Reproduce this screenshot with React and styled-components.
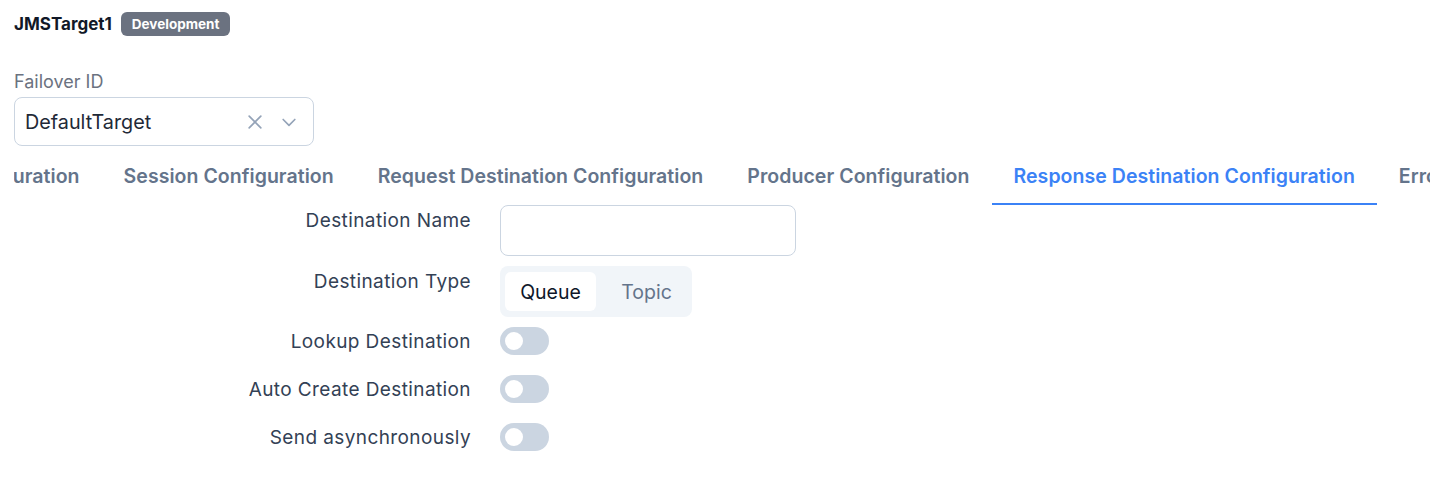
import React, { useLayoutEffect, useRef, useState } from "react";
import styled, { createGlobalStyle } from "styled-components";

const GlobalStyle = createGlobalStyle`
    * { box-sizing: border-box; }
    body {
        margin: 0;
        background: #ffffff;
        font-family: Inter, "Noto Sans", sans-serif;
        color: #334155;
    }
`;

const Page = styled.div`
    padding: 12px 0 0 14px;
    width: 1450px;
    height: 489px;
    overflow: hidden;
`;

const Header = styled.div`
    display: flex;
    align-items: center;
    gap: 9px;
    height: 24px;
`;

const Title = styled.h1`
    margin: 0;
    font-size: 17px;
    font-weight: 700;
    color: #111827;
`;

const Badge = styled.span`
    background: #6b7280;
    color: #ffffff;
    font-size: 13.5px;
    font-weight: 700;
    padding: 0 11px;
    height: 24px;
    line-height: 24px;
    border-radius: 6px;
`;

const Field = styled.div`
    margin-top: 34px;
    width: 300px;
`;

const FieldLabel = styled.label`
    display: block;
    font-size: 18px;
    color: #6b7280;
    line-height: 24px;
    margin-bottom: 3px;
`;

const SelectBox = styled.div`
    display: flex;
    align-items: center;
    height: 49px;
    border: 1px solid #cbd5e1;
    border-radius: 8px;
    padding: 0 14px 0 10px;
`;

const SelectValue = styled.span`
    flex: 1;
    font-size: 19.8px;
    color: #1f2937;
`;

const SelectIcons = styled.span`
    display: flex;
    align-items: center;
    gap: 14px;
    color: #94a3b8;
`;

const TabsViewport = styled.div`
    margin-top: 8px;
    width: 1416px;
    overflow: hidden;
`;

const TabTrack = styled.div`
    display: flex;
    white-space: nowrap;
    height: 51px;
`;

const Tab = styled.div`
    flex: none;
    padding: 0 22px;
    height: 51px;
    line-height: 44px;
    font-size: 19.5px;
    letter-spacing: 0.05px;
    font-weight: 600;
    color: ${(p) => (p.$active ? "#3b82f6" : "#64748b")};
    border-bottom: 2px solid ${(p) => (p.$active ? "#3b82f6" : "transparent")};
`;

const Form = styled.div`
    display: flex;
    flex-direction: column;
    gap: 10px;
`;

const Row = styled.div`
    display: grid;
    grid-template-columns: 457px auto;
    column-gap: 29px;
    align-items: start;
    min-height: ${(p) => p.$h || 28}px;
`;

const RowLabel = styled.div`
    text-align: right;
    font-size: 19px;
    letter-spacing: 0.4px;
    line-height: 28px;
    padding-top: ${(p) => (p.$top ? 2 : 1)}px;
    color: #334155;
`;

const TextInput = styled.input`
    width: 296px;
    height: 51px;
    border: 1px solid #cbd5e1;
    border-radius: 8px;
    outline: none;
    font-size: 18px;
    padding: 0 12px;
    font-family: inherit;
`;

const Segmented = styled.div`
    display: inline-flex;
    background: #f1f5f9;
    border-radius: 8px;
    padding: 6px 5px;
    height: 51px;
`;

const Segment = styled.button`
    border: 0;
    font-family: inherit;
    font-size: 19.5px;
    height: 39px;
    padding: 0 0 0 ${(p) => (p.$active ? 0 : 10)}px;
    width: 91px;
    border-radius: 6px;
    background: ${(p) => (p.$active ? "#ffffff" : "transparent")};
    color: ${(p) => (p.$active ? "#0f172a" : "#64748b")};
    cursor: pointer;
`;

const Switch = styled.button`
    position: relative;
    width: 49px;
    height: 28px;
    border: 0;
    border-radius: 14px;
    background: ${(p) => (p.$on ? "#3b82f6" : "#cbd5e1")};
    padding: 0;
    cursor: pointer;

    &::after {
        content: "";
        position: absolute;
        top: 5px;
        left: ${(p) => (p.$on ? 26 : 5)}px;
        width: 18px;
        height: 18px;
        border-radius: 50%;
        background: #ffffff;
    }
`;

const tabs = [
    "Connection Configuration",
    "Session Configuration",
    "Request Destination Configuration",
    "Producer Configuration",
    "Response Destination Configuration",
    "Error Handling",
];

const App = () => {
    const viewport = useRef();
    const firstTab = useRef();
    const [type, setType] = useState("Queue");
    const [flags, setFlags] = useState({ lookup: false, auto: false, async: false });

    useLayoutEffect(() => {
        // tab strip is scrolled so only the tail of the first tab shows
        viewport.current.scrollLeft = firstTab.current.offsetWidth - 88;
    }, []);

    const flip = (k) => setFlags({ ...flags, [k]: !flags[k] });

    return (
        <Page>
            <GlobalStyle />
            <Header>
                <Title>JMSTarget1</Title>
                <Badge>Development</Badge>
            </Header>

            <Field>
                <FieldLabel>Failover ID</FieldLabel>
                <SelectBox>
                    <SelectValue>DefaultTarget</SelectValue>
                    <SelectIcons>
                        <svg width="20" height="20" viewBox="0 0 24 24" fill="none" stroke="currentColor" strokeWidth="2" strokeLinecap="round">
                            <path d="M5 5l14 14M19 5L5 19" />
                        </svg>
                        <svg width="20" height="20" viewBox="0 0 24 24" fill="none" stroke="currentColor" strokeWidth="2" strokeLinecap="round" strokeLinejoin="round">
                            <path d="M5 9l7 7 7-7" />
                        </svg>
                    </SelectIcons>
                </SelectBox>
            </Field>

            <TabsViewport ref={viewport}>
                <TabTrack>
                    {tabs.map((t, i) => (
                        <Tab key={t} ref={i === 0 ? firstTab : undefined} $active={i === 4}>
                            {t}
                        </Tab>
                    ))}
                </TabTrack>
            </TabsViewport>

            <Form>
                <Row $h={51}>
                    <RowLabel $top>Destination Name</RowLabel>
                    <TextInput />
                </Row>
                <Row $h={51}>
                    <RowLabel $top>Destination Type</RowLabel>
                    <div>
                        <Segmented>
                            {["Queue", "Topic"].map((s) => (
                                <Segment key={s} $active={type === s} onClick={() => setType(s)}>
                                    {s}
                                </Segment>
                            ))}
                        </Segmented>
                    </div>
                </Row>
                <Row $h={38}>
                    <RowLabel>Lookup Destination</RowLabel>
                    <div><Switch $on={flags.lookup} onClick={() => flip("lookup")} /></div>
                </Row>
                <Row $h={38}>
                    <RowLabel>Auto Create Destination</RowLabel>
                    <div><Switch $on={flags.auto} onClick={() => flip("auto")} /></div>
                </Row>
                <Row $h={38}>
                    <RowLabel>Send asynchronously</RowLabel>
                    <div><Switch $on={flags.async} onClick={() => flip("async")} /></div>
                </Row>
            </Form>
        </Page>
    );
};

export default App;
